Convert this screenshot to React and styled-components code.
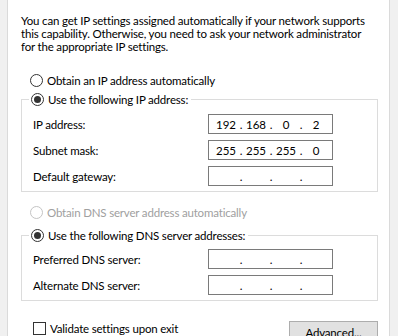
import React from "react";
import styled, { createGlobalStyle } from "styled-components";

const Global = createGlobalStyle`
  html, body { margin: 0; padding: 0; background: #f0f0f0; }
  body { font-family: Lato, "Noto Sans", sans-serif; font-size: 11.5px; letter-spacing: -0.18px; color: #000; }
`;

const Dialog = styled.div`
  width: 398px;
  height: 336px;
  overflow: hidden;
  display: flex;
  box-sizing: border-box;
  padding: 0 8px 0 7px;
  background: #f0f0f0;
`;

const Page = styled.div`
  flex: 1;
  min-width: 0;
  overflow: hidden;
  background: #fff;
  border-left: 1px solid #dadada;
  border-right: 1px solid #dadada;
  display: flex;
  flex-direction: column;
  padding: 14px 11px 0 13px;
`;

const Intro = styled.p`
  margin: 0;
  line-height: 13px;
  white-space: nowrap;
`;

const RadioRow = styled.label`
  display: flex;
  align-items: center;
  gap: 4px;
  height: 16px;
  padding-left: ${(p) => p.$indent ?? 9}px;
  margin-top: ${(p) => p.$mt || 0}px;
  color: ${(p) => (p.$disabled ? "#a0a0a0" : "#000")};
  white-space: nowrap;
`;

const RadioDot = styled.span`
  width: 11px;
  height: 11px;
  border-radius: 50%;
  border: 1px solid ${(p) => (p.$disabled ? "#c4c4c4" : "#333")};
  display: flex;
  align-items: center;
  justify-content: center;
  flex: none;
  &::after {
    content: "";
    width: 7px;
    height: 7px;
    border-radius: 50%;
    background: ${(p) => (p.$checked ? "#333" : "transparent")};
  }
`;

const Group = styled.div`
  position: relative;
  border: 1px solid #dcdcdc;
  margin-top: ${(p) => p.$mt}px;
  padding: ${(p) => p.$pt}px 0 5px 11px;
  display: grid;
  grid-template-columns: 175px 125px;
  row-gap: 6px;
  align-items: center;
`;

const Legend = styled.div`
  position: absolute;
  top: -9px;
  left: 7px;
  background: #fff;
  padding: 0 3px 0 2px;
`;

const FieldLabel = styled.span`
  white-space: nowrap;
`;

const IpBox = styled.div`
  height: 20px;
  box-sizing: border-box;
  border: 1px solid #7a7a7a;
  display: flex;
  align-items: center;
  padding-left: 6px;
  letter-spacing: 0;
`;

const Octet = styled.span`
  width: 22px;
  text-align: center;
`;

const Dot = styled.span`
  width: 8px;
  text-align: center;
`;

const Footer = styled.div`
  display: flex;
  align-items: flex-start;
  justify-content: space-between;
  margin-top: 20px;
  padding-left: 12px;
`;

const CheckRow = styled.label`
  display: flex;
  align-items: center;
  gap: 4px;
  margin-top: 1px;
  white-space: nowrap;
`;

const CheckBox = styled.span`
  width: 11px;
  height: 11px;
  border: 1px solid #333;
  background: #fff;
`;

const Button = styled.button`
  width: 89px;
  height: 23px;
  flex: none;
  box-sizing: border-box;
  background: #e1e1e1;
  border: 1px solid #adadad;
  font: inherit;
  letter-spacing: inherit;
  color: #000;
  padding: 0;
`;

function IpField({ value }) {
  const parts = value ? value.split(".") : ["", "", "", ""];
  return (
    <IpBox>
      {parts.map((p, i) => (
        <React.Fragment key={i}>
          <Octet>{p}</Octet>
          {i < 3 && <Dot>.</Dot>}
        </React.Fragment>
      ))}
    </IpBox>
  );
}

function Radio({ checked, disabled, children, mt, indent }) {
  return (
    <RadioRow $disabled={disabled} $mt={mt} $indent={indent}>
      <RadioDot $checked={checked} $disabled={disabled} />
      {children}
    </RadioRow>
  );
}

export default function App() {
  return (
    <>
      <Global />
      <Dialog>
        <Page>
          <Intro>
            You can get IP settings assigned automatically if your network supports
            <br />
            this capability. Otherwise, you need to ask your network administrator
            <br />
            for the appropriate IP settings.
          </Intro>
          <Radio mt={21}>Obtain an IP address automatically</Radio>
          <Group $mt={12} $pt={14}>
            <Legend>
              <Radio checked indent={0}>Use the following IP address:</Radio>
            </Legend>
            <FieldLabel>IP address:</FieldLabel>
            <IpField value="192.168.0.2" />
            <FieldLabel>Subnet mask:</FieldLabel>
            <IpField value="255.255.255.0" />
            <FieldLabel>Default gateway:</FieldLabel>
            <IpField />
          </Group>
          <Radio disabled mt={14}>Obtain DNS server address automatically</Radio>
          <Group $mt={16} $pt={13}>
            <Legend>
              <Radio checked indent={0}>Use the following DNS server addresses:</Radio>
            </Legend>
            <FieldLabel>Preferred DNS server:</FieldLabel>
            <IpField />
            <FieldLabel>Alternate DNS server:</FieldLabel>
            <IpField />
          </Group>
          <Footer>
            <CheckRow>
              <CheckBox />
              Validate settings upon exit
            </CheckRow>
            <Button>Advanced...</Button>
          </Footer>
        </Page>
      </Dialog>
    </>
  );
}
